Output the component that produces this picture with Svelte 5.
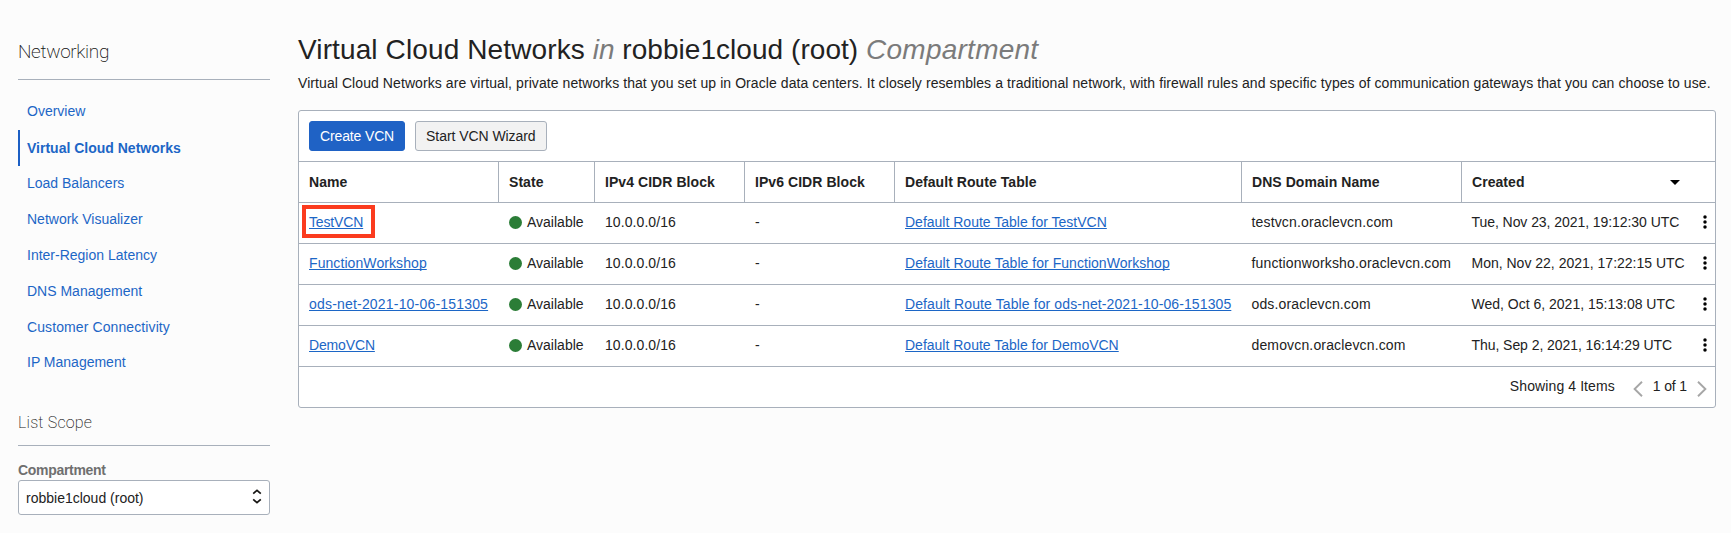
<script>
  const nav = [
    { label: 'Overview' },
    { label: 'Virtual Cloud Networks', active: true },
    { label: 'Load Balancers' },
    { label: 'Network Visualizer' },
    { label: 'Inter-Region Latency' },
    { label: 'DNS Management' },
    { label: 'Customer Connectivity', wide: true },
    { label: 'IP Management' }
  ];

  const columns = ['Name', 'State', 'IPv4 CIDR Block', 'IPv6 CIDR Block', 'Default Route Table', 'DNS Domain Name', 'Created'];

  const rows = [
    { name: 'TestVCN', dns: 'testvcn.oraclevcn.com', created: 'Tue, Nov 23, 2021, 19:12:30 UTC', marked: true, tight: true },
    { name: 'FunctionWorkshop', dns: 'functionworksho.oraclevcn.com', created: 'Mon, Nov 22, 2021, 17:22:15 UTC' },
    { name: 'ods-net-2021-10-06-151305', dns: 'ods.oraclevcn.com', created: 'Wed, Oct 6, 2021, 15:13:08 UTC', loose: true },
    { name: 'DemoVCN', dns: 'demovcn.oraclevcn.com', created: 'Thu, Sep 2, 2021, 16:14:29 UTC', tight: true }
  ];
</script>

<div class="page">
  <aside>
    <h2>Networking</h2>
    <nav>
      {#each nav as item}
        <a class:active={item.active} class:wide={item.wide} href="#top">{item.label}</a>
      {/each}
    </nav>
    <h3>List Scope</h3>
    <div class="label">Compartment</div>
    <div class="select">
      <span>robbie1cloud (root)</span>
      <svg width="10" height="16" viewBox="0 0 10 16" fill="none" stroke="#161513" stroke-width="1.7">
        <path d="M1.2 4.7 5 1.3l3.8 3.4M1.2 10.3 5 13.7l3.8-3.4" />
      </svg>
    </div>
  </aside>

  <main>
    <h1><span class="subject">Virtual Cloud Networks</span> <em>in</em> <span class="scope">robbie1cloud (root)</span> <em class="kind">Compartment</em></h1>
    <p class="intro">Virtual Cloud Networks are virtual, private networks that you set up in Oracle data centers. It closely resembles a traditional network, with firewall rules and specific types of communication gateways that you can choose to use.</p>

    <section class="panel">
      <div class="toolbar">
        <button class="primary">Create VCN</button>
        <button>Start VCN Wizard</button>
      </div>

      <div class="row head">
        {#each columns as column, i}
          <div class="cell">
            {column}
            {#if i === columns.length - 1}
              <svg class="sort" width="10" height="5" viewBox="0 0 10 5"><path d="M0 0h10L5 5z" fill="#000" /></svg>
            {/if}
          </div>
        {/each}
      </div>

      {#each rows as row}
        <div class="row item" class:tight={row.tight} class:loose={row.loose}>
          <div class="cell name"><a class="link" class:marked={row.marked} href="#top">{row.name}</a></div>
          <div class="cell state"><i></i>Available</div>
          <div class="cell cidr">10.0.0.0/16</div>
          <div class="cell">-</div>
          <div class="cell route"><a class="link" href="#top">Default Route Table for {row.name}</a></div>
          <div class="cell dns">{row.dns}</div>
          <div class="cell created">
            {row.created}
            <svg width="4" height="14" viewBox="0 0 4 14" fill="#000">
              <circle cx="2" cy="2" r="1.75" /><circle cx="2" cy="7" r="1.75" /><circle cx="2" cy="12" r="1.75" />
            </svg>
          </div>
        </div>
      {/each}

      <div class="footer">
        <span class="count">Showing 4 Items</span>
        <svg width="10" height="16" viewBox="0 0 10 16" fill="none" stroke="#a6a6a6" stroke-width="1.9"><path d="M9 .7 1.6 8 9 15.3" /></svg>
        <span class="pages">1 of 1</span>
        <svg width="10" height="16" viewBox="0 0 10 16" fill="none" stroke="#a6a6a6" stroke-width="1.9"><path d="M1 .7 8.4 8 1 15.3" /></svg>
      </div>
    </section>
  </main>
</div>

<style>
  :global(body) {
    background: #fcfcfc;
  }

  .page {
    box-sizing: border-box;
    display: flex;
    gap: 28px;
    height: 533px;
    padding: 0 15px 0 18px;
    font: 14px/20px 'Liberation Sans', Arial, sans-serif;
    color: #222;
    white-space: nowrap;
    overflow: hidden;
  }

  h1, h2, h3, p {
    margin: 0;
    font-weight: 400;
  }

  aside {
    width: 252px;
    flex: none;
  }

  h2 {
    box-sizing: border-box;
    height: 80px;
    padding-top: 40px;
    border-bottom: 1px solid #a8b0bb;
    font: 200 19px/24px Roboto, sans-serif;
    letter-spacing: -0.35px;
    color: #111;
  }

  nav {
    display: flex;
    flex-direction: column;
    padding-top: 14px;
  }

  nav a {
    height: 36px;
    padding-left: 9px;
    line-height: 34px;
    color: #1c66c6;
    text-decoration: none;
  }

  nav a.active {
    padding-left: 7px;
    border-left: 2px solid #1c5fc4;
    line-height: 36px;
    font-weight: 700;
  }

  nav a.wide {
    letter-spacing: 0.1px;
  }

  nav a:last-child {
    line-height: 32px;
  }

  h3 {
    box-sizing: border-box;
    height: 64px;
    padding-top: 30px;
    border-bottom: 1px solid #a8b0bb;
    font: 200 16px/22px Roboto, sans-serif;
    letter-spacing: 0.2px;
    color: #222;
  }

  .label {
    padding-top: 14px;
    font-weight: 700;
    letter-spacing: -0.3px;
    color: #6f6f6f;
  }

  .select {
    box-sizing: border-box;
    display: flex;
    align-items: center;
    justify-content: space-between;
    height: 35px;
    padding: 0 7px;
    border: 1px solid #a8b0bb;
    border-radius: 3px;
    background: #fff;
  }

  .select svg {
    margin-top: -1px;
  }

  main {
    flex: 1;
    min-width: 0;
  }

  h1 {
    padding-top: 33px;
    font-size: 28px;
    line-height: 34px;
  }

  .subject {
    letter-spacing: 0.12px;
  }

  .scope {
    letter-spacing: 0.05px;
  }

  em {
    color: #7b7b7b;
  }

  .kind {
    letter-spacing: 0.25px;
  }

  .intro {
    padding: 6px 0 17px;
    letter-spacing: 0.077px;
  }

  .panel {
    border: 1px solid #a8b0bb;
    border-radius: 3px;
    background: #fff;
  }

  .toolbar {
    display: flex;
    gap: 10px;
    padding: 10px;
  }

  button {
    height: 30px;
    padding: 0 10px;
    border: 1px solid #a8b0bb;
    border-radius: 3px;
    background: #f2f2f2;
    font: inherit;
    letter-spacing: -0.06px;
    color: #222;
  }

  .primary {
    border-color: #1f62c5;
    background: #1f62c5;
    letter-spacing: -0.14px;
    color: #fff;
  }

  .row {
    display: grid;
    grid-template-columns: 200px 96px 150px 150px 347px 220px 1fr;
    height: 40px;
    border-top: 1px solid #a8b0bb;
  }

  .cell {
    display: flex;
    align-items: center;
    padding-left: 10px;
  }

  .item .cell {
    height: 38px;
  }

  .head {
    font-weight: 700;
    letter-spacing: 0.06px;
  }

  .head .cell:not(:last-child) {
    border-right: 1px solid #a8b0bb;
  }

  .sort {
    margin: 0 35px 0 auto;
  }

  .link {
    position: relative;
    color: #1c66c6;
    text-decoration: underline;
    text-decoration-thickness: 1px;
    text-underline-offset: 1px;
    text-decoration-skip-ink: none;
  }

  .name .link {
    letter-spacing: 0.08px;
  }

  .loose .name .link {
    letter-spacing: 0.19px;
  }

  .tight .name .link {
    letter-spacing: -0.15px;
  }

  .marked::after {
    content: '';
    position: absolute;
    inset: -7px -12px -6px -7px;
    border: 4px solid #fb3b1e;
  }

  .state i {
    width: 13px;
    height: 13px;
    margin-right: 5px;
    border-radius: 50%;
    background: #2b7d37;
  }

  .cidr {
    letter-spacing: 0.08px;
  }

  .route {
    letter-spacing: 0.036px;
  }

  .loose .route {
    letter-spacing: 0.105px;
  }

  .tight .route {
    letter-spacing: 0;
  }

  .item .dns,
  .item .created {
    padding-left: 9.5px;
  }

  .dns {
    letter-spacing: 0.15px;
  }

  .tight .created {
    letter-spacing: -0.06px;
  }

  .created svg {
    margin: 0 8px 0 auto;
  }

  .footer {
    display: flex;
    align-items: center;
    justify-content: flex-end;
    height: 40px;
    padding-right: 8px;
    border-top: 1px solid #a8b0bb;
  }

  .footer svg {
    margin-top: 3px;
  }

  .footer span {
    margin-top: -2px;
  }

  .count {
    margin-right: 18px;
    letter-spacing: 0.1px;
  }

  .pages {
    margin: 0 10px;
    letter-spacing: -0.15px;
  }
</style>
